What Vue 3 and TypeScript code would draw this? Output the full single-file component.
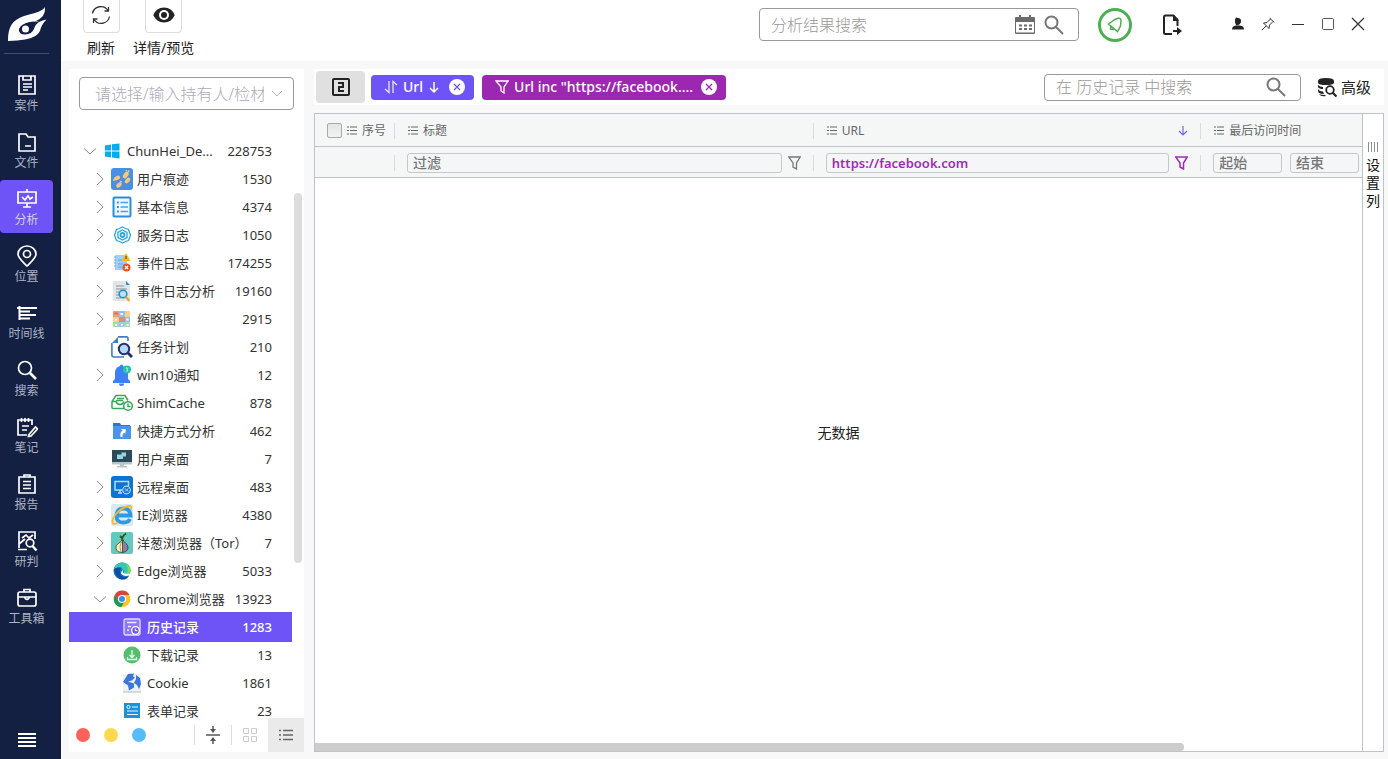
<script setup lang="ts">
import { ref } from 'vue'

interface NavItem { label: string; icon: string }
interface TreeNode { label: string; count: string; icon: string; level: number; state?: 'open' | 'closed' }

const navItems: NavItem[] = [
  { label: '案件', icon: '<path d="M3 2h16v18H3zM7 2v4h8V2M7 10h9M7 13h9M7 16h5"/>' },
  { label: '文件', icon: '<path d="M3 3h7l2 3h7v14H3zM9 15h6"/>' },
  { label: '分析', icon: '<path d="M2 4h18v11H2zM11 1v3M11 15v4M7 19h8M6 9l3 3 3-4 2 3 3-2"/>' },
  { label: '位置', icon: '<path d="M11 21C6 16 2 13 2 9a9 8 0 0 1 18 0c0 4-4 7-9 12z"/><circle cx="11" cy="9" r="3.5"/>' },
  { label: '时间线', icon: '<path d="M3.500 4v14M1 6h20M4 9.500h10M4 13h16M4 16.500h10" stroke-width="2"/>' },
  { label: '搜索', icon: '<circle cx="9" cy="9" r="6.5"/><path d="M14 14l6 6" stroke-width="2.6"/>' },
  { label: '笔记', icon: '<path d="M16 9V4H2v15h9M5.500 2v4M9 2v4M12.500 2v4M6 10h7M6 14h5M13 18.500l6.500-7.500 2 2L15 20l-2.500.5z"/>' },
  { label: '报告', icon: '<path d="M3 4h16v16H3zM8 4V2h6v2M7 8.500h8M7 12h8M7 15.500h8"/>' },
  { label: '研判', icon: '<path d="M19 9V2H3v16M2 19.500h9M6 8l4-3 3 3 4-3M3 14l6-5"/><circle cx="14" cy="13" r="3.8"/><path d="M16.500 16l4 4.500" stroke-width="2.400"/>' },
  { label: '工具箱', icon: '<rect x="2" y="5" width="18" height="14" rx="2"/><path d="M8 5V2.500h6V5M2 10h18M9 10v1q2 3 4 0v-1"/>' },
]
const activeNav = ref('分析')

const art: Record<string, string> = {
  windows: '<path fill="#00adef" d="M4 5.500l6-1v6H4zM11 4.300L18.500 3.500v7h-7.500zM4 11.500h6v6l-6-1zM11 11.500h7.500V18.500l-7.500-1z"/>',
  feet: '<rect width="22" height="22" rx="3" fill="#4a90e2"/><g fill="#f8c67c"><ellipse cx="14.800" cy="7" rx="2.300" ry="3.800" transform="rotate(35 14.800 7)"/><ellipse cx="6" cy="10" rx="2" ry="3.200" transform="rotate(65 6 10)"/><ellipse cx="16.500" cy="12.500" rx="2" ry="3.300" transform="rotate(40 16.500 12.500)"/><ellipse cx="8" cy="17" rx="2" ry="3.200" transform="rotate(45 8 17)"/><circle cx="17.500" cy="3.300" r="1"/><circle cx="15.300" cy="2.800" r=".8"/><circle cx="3" cy="12" r="1"/><circle cx="9.800" cy="13.800" r="1"/></g>',
  info: '<rect x="2.500" y="1.500" width="17" height="19" rx="1" fill="#eef6fd" stroke="#2a8de0" stroke-width="2"/><path d="M9.500 6.500H17M9.500 11H17M9.500 15.500H17" stroke="#4aa3ea" stroke-width="1.600"/><path d="M6 6.500h1.800M6 11h1.800M6 15.500h1.800" stroke="#2a8de0" stroke-width="1.800"/>',
  service: '<g fill="none" stroke="#29a5e0" stroke-width="1.300"><path d="M11.500 3l3 1.500 3 1 1 3 1 2.500-1 3-1 2.500-3 1-3 1.500-3-1.500-3-1-1-2.500-1-3 1-2.500 1-3 3-1z"/><path d="M11.500 6l4.500 2.500v5l-4.500 2.500L7 13.500v-5z"/><circle cx="11.500" cy="11" r="2" stroke-width="1.800"/></g>',
  event: '<path fill="#9ed0fb" d="M4 3h12v15H4z"/><path stroke="#5ba8ec" d="M3 5h2M3 8h2M3 11h2M3 14h2M7 8h7M7 12h5M7 15h4"/><path fill="#fdb614" d="M15 1L19.500 9h-9z"/><path stroke="#754b00" stroke-width="1.200" d="M15 4v3"/><circle cx="15.500" cy="15.500" r="4" fill="#f04e23"/><path stroke="#fff" stroke-width="1.400" d="M14 14l3 3M17 14l-3 3"/>',
  analyze: '<path fill="#e3e6e8" d="M2 1h13l4 4v16H2z"/><path fill="#2196d6" d="M15 1l4 4h-4z"/><path stroke="#8b9399" d="M5 6h8M5 9h11M5 12h3M5 15h3M5 18h5"/><circle cx="12" cy="14" r="3.800" fill="#b9e4fa" stroke="#258fc8" stroke-width="1.600"/><path stroke="#f5a623" stroke-width="2.400" d="M15 17l3.500 4"/>',
  thumbs: '<path fill="#ee9a7b" d="M2 3h6v6H2z"/><path fill="#8fc3ee" d="M8 3h6v6H8zM14 9h5v5h-5z"/><path fill="#f6cf93" d="M14 3h5v6h-5zM2 9h6v5H2z"/><path fill="#e88a68" d="M8 9h6v5H8z"/><path fill="#a9d6aa" d="M2 14h6v5H2zM14 14h5v5h-5z"/><path fill="#9ccbf0" d="M8 14h6v5H8z"/><path stroke="#dd7358" stroke-width="1.500" d="M3 6l2-1 2 1"/><path fill="#fff" d="M9.500 5h2.500v2H9.500zM15.500 10.500h2v2h-2zM4 11h2v1.500H4zM4 16h2v2H4zM10 16h2v1.500h-2zM15.500 16h2v2h-2z"/>',
  task: '<path fill="#3b7ec4" d="M1 7l6-6v6z"/><path fill="none" stroke="#3b7ec4" stroke-width="1.600" d="M7 .9h8.500q1.500 0 1.500 2V5M.9 7v12q0 2 2 2H13"/><circle cx="13" cy="13" r="5.200" fill="#b4d8f6" stroke="#252f6c" stroke-width="2"/><path stroke="#252f6c" stroke-width="2.800" d="M17 17l4 4"/>',
  bell: '<path fill="#3d7ff5" d="M10.500.5q1.500 0 1.500 1.500 5 1.500 5 7v6l2 2v2H2V17l2-2V9q0-5.500 5-7Q9 .5 10.500.5zM8 19.500h5q0 2.500-2.500 2.500T8 19.500z"/><circle cx="16" cy="5.500" r="4" fill="#1fc9a5"/><path stroke="#fff" d="M15 4.500l1-.8V7.500"/>',
  shim: '<g fill="none" stroke="#34a95b" stroke-width="1.500"><path d="M13 16.500H2q-1 0-1-1V9.500l4-6h9l3 5M1 9.500h4q1 3 4 3t4-3M6 6.500h7M5 8.500h7"/><circle cx="17" cy="14" r="4.300"/><path d="M17 11.500v3h2.500"/></g>',
  shortcut: '<path fill="#2f75d6" d="M2 3h7l1 2h9v3H2z"/><path fill="#4a94ea" d="M2 6h18v13H2z"/><path fill="#fff" d="M10 9l5 .2-.8 4.500-1.200-1.200q-2 1.500-1.500 4.500h-2q-1-4.500 2-6.500z"/>',
  desktop: '<path fill="#2c4a57" d="M1 2h20v13H1z"/><path fill="#b8c6cc" d="M1 14h20v2.500H1zM9 16.500h4v2H9zM6 18h10v1.500H6z"/><path fill="#8ed8e8" d="M10.500 4.500H15v4h-4.500zM6 6.500h6V11H6z"/>',
  remote: '<rect width="22" height="22" rx="3" fill="#0d74d3"/><path fill="none" stroke="#b4dbfa" stroke-width="1.500" d="M17.500 10V5.500H4V14h7M7 17h4M9 14v3"/><circle cx="15.500" cy="14" r="3.800" fill="#0d74d3" stroke="#b4dbfa" stroke-width="1.200"/><path fill="none" stroke="#b4dbfa" d="M14 12.300l1.500 1.700-1.500 1.700M17.300 12.300L15.800 14l1.500 1.700"/>',
  ie: '<rect width="22" height="22" rx="2" fill="#dceaf0"/><path fill="none" stroke="#2c9be6" stroke-width="3.800" d="M6 11.500h13.500Q19 4.500 12.500 4.500T5.500 11.500t7 7q5 0 6.500-3.500"/><path fill="none" stroke="#f4b92c" stroke-width="1.800" d="M2 19.500Q0 16 5.500 9.500T18.500 2q2.500 0 1.500 3.500M2 19.500q1.500 1 5-1"/>',
  tor: '<rect width="22" height="22" rx="2" fill="#63c8bd"/><path fill="#8f7bb0" stroke="#31451e" stroke-width=".8" d="M11.500 7q1 2.500 3.500 4.500t2 5.500q-1.500 3.500-6 3.500z"/><path fill="#f6f0c3" stroke="#31451e" stroke-width=".8" d="M11.500 7q-.5 2.500-4 4.500T5 16.500q1 4 6.500 4z"/><path fill="none" stroke="#31571e" stroke-width="1.800" d="M11.500 9Q10 5 15 1.500M11 6L9 4"/><path fill="none" stroke="#b79a43" d="M10.500 10q-3 5-.5 10"/>',
  edge: '<circle cx="11" cy="11" r="8.500" fill="#1477c8"/><path fill="#35c9b2" d="M3 9Q5 2.500 11.500 2.500q7.500.8 8 7.500 0 4-4.500 4.200-3 0-2-2.200Q12.500 7 3 9z"/><path fill="#79dc5c" d="M14.500 3.200q5 2.500 5 7t-4 4q3-5-1-11z"/><path fill="#0c4ea0" d="M3 9q5-3 8-1-4 3-1 7t8 1q-3 4.500-8 3.400T3 9z"/><path fill="#fff" d="M12 10q-1.500 5 7.500 3.500l-1 2q-6.500 1.500-8.500-2 0-2.500 2-3.500z"/>',
  chrome: '<circle cx="11" cy="11" r="8.300" fill="#f8c51c"/><path fill="#dc4437" d="M3.800 6.900A8.300 8.300 0 0 1 18.400 7H11l-3.500 6z"/><path fill="#159a59" d="M3.800 6.900A8.300 8.300 0 0 0 10 19.200L14 13l-6.500 0z"/><circle cx="11" cy="11" r="4" fill="#fff"/><circle cx="11" cy="11" r="3" fill="#4387ee"/>',
  history: '<rect x="3" y="3" width="16" height="16" rx="1.500" fill="#8b77fa" stroke="#e2ddff" stroke-width="1.300"/><path fill="none" stroke="#eeeaff" stroke-width="1.300" d="M6 6.500h9.500M7 10.500h3M6 14h2"/><circle cx="14.500" cy="14.500" r="3.800" fill="#6f57f8" stroke="#fff" stroke-width="1.300"/><path fill="none" stroke="#fff" d="M14.300 12.500v2.200h2"/>',
  download: '<circle cx="11" cy="11" r="8.500" fill="#55bd6c"/><path fill="none" stroke="#e6fae9" stroke-width="1.300" d="M11 6v7M8.500 11l2.500 2.500L13.500 11M6.500 13v2.500h9V13"/>',
  cookie: '<rect x="2" y="2" width="18" height="18" fill="#eef1f4"/><path stroke="#b7babe" d="M2 20h18"/><circle cx="12" cy="10" r="8" fill="#eaf2fc"/><path fill="#3b76d8" d="M2 10l5-8 6-.5-1 3 2 1-3 3-4 1 6 2v4l-5 3-1-5zM15 3l4 3 1 6-2 5-2-4-3-2 2-4z"/>',
  form: '<path fill="#1b92d7" d="M3 3h16v17H3z"/><circle cx="7.500" cy="7" r="1.600" fill="none" stroke="#e6f8ff"/><path stroke="#e6f8ff" stroke-width="1.200" d="M11 7h6M6 11h11M6 14.500h11"/>',
}

const tree: TreeNode[] = [
  { label: 'ChunHei_De...', count: '228753', icon: 'windows', level: 0, state: 'open' },
  { label: '用户痕迹', count: '1530', icon: 'feet', level: 1, state: 'closed' },
  { label: '基本信息', count: '4374', icon: 'info', level: 1, state: 'closed' },
  { label: '服务日志', count: '1050', icon: 'service', level: 1, state: 'closed' },
  { label: '事件日志', count: '174255', icon: 'event', level: 1, state: 'closed' },
  { label: '事件日志分析', count: '19160', icon: 'analyze', level: 1, state: 'closed' },
  { label: '缩略图', count: '2915', icon: 'thumbs', level: 1, state: 'closed' },
  { label: '任务计划', count: '210', icon: 'task', level: 1 },
  { label: 'win10通知', count: '12', icon: 'bell', level: 1, state: 'closed' },
  { label: 'ShimCache', count: '878', icon: 'shim', level: 1 },
  { label: '快捷方式分析', count: '462', icon: 'shortcut', level: 1 },
  { label: '用户桌面', count: '7', icon: 'desktop', level: 1 },
  { label: '远程桌面', count: '483', icon: 'remote', level: 1, state: 'closed' },
  { label: 'IE浏览器', count: '4380', icon: 'ie', level: 1, state: 'closed' },
  { label: '洋葱浏览器（Tor）', count: '7', icon: 'tor', level: 1, state: 'closed' },
  { label: 'Edge浏览器', count: '5033', icon: 'edge', level: 1, state: 'closed' },
  { label: 'Chrome浏览器', count: '13923', icon: 'chrome', level: 1, state: 'open' },
  { label: '历史记录', count: '1283', icon: 'history', level: 2 },
  { label: '下载记录', count: '13', icon: 'download', level: 2 },
  { label: 'Cookie', count: '1861', icon: 'cookie', level: 2 },
  { label: '表单记录', count: '23', icon: 'form', level: 2 },
]
const selected = ref('历史记录')
const urlFilter = ref('https://facebook.com')
</script>

<template>
  <div class="app">
    <nav class="nav">
      <div class="logo">
        <svg width="40" height="36" viewBox="0 0 40 36"><path fill="#fff" d="M37 0C34 5 26 6 16 9 4 13 0 20 0 34q10-.5 17-1.500 12-2 15-8.500 1-6 6.500-11.500-4 .5-7.500 2.500-2-1-4-.5Q38 10 37 0z"/><path fill="#132042" d="M31 15q-7-1.500-13 1-8 3.500-7 8 1 3.500 6 3.500 7-.5 9-5.500 1-4.500 5-7z"/><circle cx="17.500" cy="22" r="3.500" fill="#fff"/></svg>
      </div>
      <div class="nav-list">
        <button v-for="item in navItems" :key="item.label" type="button" class="nav-item" :class="{ active: item.label === activeNav }" @click="activeNav = item.label">
          <svg class="line" width="22" height="22" viewBox="0 0 22 22" v-html="item.icon"></svg>
          <span>{{ item.label }}</span>
        </button>
      </div>
      <button type="button" class="burger" aria-label="菜单">
        <svg width="18" height="16" viewBox="0 0 18 16"><path stroke="#fff" stroke-width="2" d="M0 2h18M0 6h18M0 10h18M0 14h18"/></svg>
      </button>
    </nav>

    <div class="content">
      <header class="topbar">
        <button type="button" class="tool">
          <span class="tool-box"><svg width="20" height="20" viewBox="0 0 20 20" fill="none" stroke="#333" stroke-width="1.3"><path d="M1.500 8.500a8.500 8.500 0 0 1 15.500-3M18.500 11.500a8.500 8.500 0 0 1-15.500 3M17.500 2v4h-4M2.500 18v-4h4"/></svg></span>
          <span>刷新</span>
        </button>
        <button type="button" class="tool">
          <span class="tool-box"><svg width="22" height="16" viewBox="0 0 22 16"><path fill="#222" d="M11 .5C6 .5 2 3.500.3 8 2 12.500 6 15.500 11 15.500S20 12.500 21.700 8C20 3.500 16 .5 11 .5z"/><circle cx="11" cy="8" r="5" fill="#fff"/><circle cx="11" cy="8" r="3" fill="#222"/></svg></span>
          <span>详情/预览</span>
        </button>
        <div class="search global">
          <input type="text" placeholder="分析结果搜索" aria-label="分析结果搜索" />
          <button type="button" aria-label="日期"><svg width="20" height="19" viewBox="0 0 20 19"><path fill="#6b6b6b" fill-rule="evenodd" d="M1 2h3V0h2v2h8V0h2v2h3q1 0 1 1v15q0 1-1 1H1q-1 0-1-1V3q0-1 1-1zm0 5v10.500h18V7z"/><path stroke="#6b6b6b" stroke-width="2" stroke-dasharray="3 2" d="M4 10.500h13M4 14h13"/></svg></button>
          <button type="button" aria-label="搜索"><svg width="20" height="20" viewBox="0 0 20 20" fill="none" stroke="#777"><circle cx="7.500" cy="7.500" r="6" stroke-width="2"/><path stroke-width="2" d="M12 12l7 7"/></svg></button>
        </div>
        <button type="button" class="alarm" aria-label="通知"><svg width="16" height="16" viewBox="0 0 16 16" fill="none" stroke="#4caf50" stroke-width="1.500"><path d="M1.500 7L8 2.500Q14-.5 14 3.500L13.500 9l-3 5.500zM4 9l-.5 3 3.500.5"/></svg></button>
        <button type="button" class="export" aria-label="导出"><svg width="20" height="22" viewBox="0 0 20 22"><path fill="none" stroke="#222" stroke-width="2" d="M9 20H2.500Q1 20 1 18.500V3q0-1.500 1.500-1.500h8l4 4.500v6"/><path fill="#222" d="M10 1v6h6zM10 16h4v-3l5 4-5 4v-3h-4z"/></svg></button>
        <div class="window-tools">
          <button type="button" aria-label="用户"><svg width="14" height="14" viewBox="0 0 14 14"><path fill="#222" d="M7 1q3 0 3 3T7 8 4 4t3-3zM1 12.500q0-3.500 4-4h4q4 .5 4 4z"/></svg></button>
          <button type="button" aria-label="置顶"><svg width="14" height="14" viewBox="0 0 14 14" fill="none" stroke="#333"><path d="M8.500.8L13.200 5.500M9.500 2L6 5.500l-3.500.5 5.500 5.500.5-3.500L12 4.500M5.200 8.800L.8 13.200"/></svg></button>
          <button type="button" aria-label="最小化"><svg width="14" height="14" viewBox="0 0 14 14" stroke="#333"><path d="M1 7.500h12"/></svg></button>
          <button type="button" aria-label="最大化"><svg width="14" height="14" viewBox="0 0 14 14" fill="none" stroke="#555"><rect x="1.500" y="1.500" width="11" height="11" rx="1"/></svg></button>
          <button type="button" aria-label="关闭"><svg width="14" height="14" viewBox="0 0 14 14" stroke="#333" stroke-width="1.200"><path d="M1 1l12 12M13 1L1 13"/></svg></button>
        </div>
      </header>

      <div class="workspace">
        <aside class="side">
          <div class="picker">
            <input type="text" placeholder="请选择/输入持有人/检材" aria-label="持有人或检材" />
            <svg width="12" height="8" viewBox="0 0 12 8" fill="none" stroke="#b4b7bd"><path d="M1 1l5 5 5-5"/></svg>
          </div>
          <div class="tree-area">
            <div class="tree" role="tree">
              <button v-for="node in tree" :key="node.label" type="button" role="treeitem" class="row" :class="['level' + node.level, { selected: node.label === selected }]" :aria-selected="node.label === selected" @click="selected = node.label">
                <svg class="arrow" width="14" height="14" viewBox="0 0 14 14" fill="none" stroke="#8c8c8c"><path v-if="node.state === 'open'" d="M1 4.500l6 5.500 6-5.500"/><path v-else-if="node.state === 'closed'" d="M4 1l6 6-6 6"/></svg>
                <svg class="art" width="22" height="22" viewBox="0 0 22 22" v-html="art[node.icon]"></svg>
                <span class="name">{{ node.label }}</span>
                <span class="count">{{ node.count }}</span>
              </button>
            </div>
            <div class="track"><div class="thumb"></div></div>
          </div>
          <footer class="side-foot">
            <button type="button" class="dot red" aria-label="红色标记"></button>
            <button type="button" class="dot yellow" aria-label="黄色标记"></button>
            <button type="button" class="dot blue" aria-label="蓝色标记"></button>
            <button type="button" class="foot-tool first" aria-label="折叠"><svg width="14" height="20" viewBox="0 0 14 20"><path stroke="#555" stroke-width="1.500" d="M0 10h14M7 1v6M7 13v6"/><path fill="#555" d="M4 4h6L7 8zM4 16h6l-3-4z"/></svg></button>
            <button type="button" class="foot-tool" aria-label="网格"><svg width="14" height="14" viewBox="0 0 14 14" fill="none" stroke="#ccc"><path d="M.5.5h5v5h-5zM8.500.5h5v5h-5zM.5 8.500h5v5h-5zM8.500 8.500h5v5h-5z"/></svg></button>
            <button type="button" class="foot-list" aria-label="列表"><svg width="14" height="12" viewBox="0 0 14 12" stroke="#666" stroke-width="1.500"><path d="M0 1.500h2M4 1.500h10M0 6h2M4 6h10M0 10.500h2M4 10.500h10"/></svg></button>
          </footer>
        </aside>

        <main class="results">
          <div class="query">
            <button type="button" class="tally" aria-label="条件数量"><svg width="18" height="18" viewBox="0 0 18 18" fill="none" stroke="#222" stroke-width="2"><rect x="1" y="1" width="16" height="16" rx="1"/><path d="M6 5h5v4H7v4h5"/></svg></button>
            <div class="chip sort">
              <svg width="14" height="14" viewBox="0 0 14 14" fill="none" stroke="#e8e3ff" stroke-width="1.300"><path d="M5 1v11.500L1 9M9 13V1.500L13 5"/></svg>
              <span>Url</span>
              <svg width="12" height="12" viewBox="0 0 12 12" fill="none" stroke="#fff" stroke-width="1.500"><path d="M6 1v10M2 7l4 4 4-4"/></svg>
              <button type="button" aria-label="移除排序"><svg width="16" height="16" viewBox="0 0 16 16"><circle cx="8" cy="8" r="8" fill="#fff"/><path stroke="#6e54f7" stroke-width="1.300" d="M5 5l6 6M11 5l-6 6"/></svg></button>
            </div>
            <div class="chip filter">
              <svg width="14" height="14" viewBox="0 0 14 14" fill="none" stroke="#fff" stroke-width="1.300"><path d="M1 1h12L9 7v6l-3-2V7z"/></svg>
              <span>Url inc "https://facebook....</span>
              <button type="button" aria-label="移除过滤"><svg width="16" height="16" viewBox="0 0 16 16"><circle cx="8" cy="8" r="8" fill="#fff"/><path stroke="#9c27b0" stroke-width="1.300" d="M5 5l6 6M11 5l-6 6"/></svg></button>
            </div>
            <div class="search local">
              <input type="text" placeholder="在 历史记录 中搜索" aria-label="在 历史记录 中搜索" />
              <button type="button" aria-label="搜索"><svg width="20" height="20" viewBox="0 0 20 20" fill="none" stroke="#777"><circle cx="7.500" cy="7.500" r="6" stroke-width="2"/><path stroke-width="2" d="M12 12l7 7"/></svg></button>
            </div>
            <button type="button" class="advanced">
              <svg width="20" height="20" viewBox="0 0 20 20"><path fill="#222" d="M1 4Q1 1 9 1t8 3v2q-1 2-8 2T1 6zM1 8q2 2 5 2v2Q2 12 1 10zM1 12q1 2 5 2.500L7 17Q1 17 1 14zM2 17q2 1 6 1l1 1q-5 1-7-2z"/><circle cx="13" cy="13" r="3.800" fill="#fff" stroke="#222" stroke-width="1.800"/><path stroke="#222" stroke-width="2.200" d="M15.500 15.500l4 4"/></svg>
              <span>高级</span>
            </button>
          </div>

          <div class="grid">
            <div class="grid-main">
              <table>
                <colgroup><col class="c-index" /><col class="c-title" /><col class="c-url" /><col /></colgroup>
                <thead>
                  <tr class="heads">
                    <th class="index"><div class="cell"><input type="checkbox" aria-label="全选" /><svg class="menu" width="10" height="9" viewBox="0 0 10 9"><path d="M0 1h2M3 1h7M0 4.500h2M3 4.500h7M0 8h2M3 8h7"/></svg><span>序号</span></div></th>
                    <th><div class="cell"><svg class="menu" width="10" height="9" viewBox="0 0 10 9"><path d="M0 1h2M3 1h7M0 4.500h2M3 4.500h7M0 8h2M3 8h7"/></svg><span>标题</span></div></th>
                    <th><div class="cell"><svg class="menu" width="10" height="9" viewBox="0 0 10 9"><path d="M0 1h2M3 1h7M0 4.500h2M3 4.500h7M0 8h2M3 8h7"/></svg><span>URL</span><svg class="sorted" width="10" height="10" viewBox="0 0 10 10" fill="none" stroke="#7660f8" stroke-width="1.200"><path d="M5 0v9M1 5l4 4 4-4"/></svg></div></th>
                    <th><div class="cell last"><svg class="menu" width="10" height="9" viewBox="0 0 10 9"><path d="M0 1h2M3 1h7M0 4.500h2M3 4.500h7M0 8h2M3 8h7"/></svg><span>最后访问时间</span></div></th>
                  </tr>
                  <tr class="filters">
                    <td><div class="cell"></div></td>
                    <td><div class="cell"><input type="text" placeholder="过滤" aria-label="标题过滤" /><svg width="13" height="14" viewBox="0 0 13 14" fill="none" stroke="#777" stroke-width="1.300"><path d="M.8 1h11.400L8.500 7v6l-3.500-2V7z"/></svg></div></td>
                    <td><div class="cell"><input v-model="urlFilter" type="text" class="url" aria-label="URL过滤" /><svg width="13" height="14" viewBox="0 0 13 14" fill="none" stroke="#a22bb6" stroke-width="1.500"><path d="M.8 1h11.400L8.500 7v6l-3.500-2V7z"/></svg></div></td>
                    <td><div class="cell range"><input type="text" placeholder="起始" aria-label="起始时间" /><input type="text" placeholder="结束" aria-label="结束时间" /></div></td>
                  </tr>
                </thead>
              </table>
              <div class="empty">无数据</div>
              <div class="h-thumb"></div>
            </div>
            <button type="button" class="columns">
              <svg width="11" height="10" viewBox="0 0 11 10" stroke="#8a8f93"><path d="M.5 0v10M3.500 0v10M6.500 0v10M9.500 0v10"/></svg>
              <span>设置列</span>
            </button>
          </div>
        </main>
      </div>
    </div>
  </div>
</template>

<style>
body { margin: 0; }
</style>

<style scoped>
.app, .app * { box-sizing: border-box; }
.app { display: flex; height: 100vh; overflow: hidden; background: #f8f8f8; color: #222; font: 14px/20px "Noto Sans", "Noto Sans CJK SC", sans-serif; }
svg { display: block; flex: none; }
button { display: flex; align-items: center; justify-content: center; margin: 0; padding: 0; border: 0; background: none; color: inherit; font: inherit; cursor: pointer; }
input { min-width: 0; margin: 0; font: inherit; outline: none; }

.nav { display: flex; flex: none; flex-direction: column; width: 61px; padding-bottom: 11px; background: #132042; }
.logo { width: 45px; height: 54px; margin-left: 4px; padding: 7px 0 0 4px; border-bottom: 1px solid #3f4d7c; }
.nav-list { display: flex; flex: 1; flex-direction: column; gap: 4px; padding-top: 12px; }
.nav-item { flex-direction: column; gap: 1px; width: 53px; height: 53px; padding-top: 4px; border-radius: 4px; color: #aeb4c4; font-size: 12px; line-height: 18px; white-space: nowrap; }
.nav-item.active { background: #6e54f7; color: #d5cdff; }
.line { fill: none; stroke: #fff; stroke-width: 1.7; }
.burger { width: 53px; }

.content { display: flex; flex: 1; flex-direction: column; min-width: 0; }
.topbar { display: flex; flex: none; align-items: flex-start; height: 61px; padding: 0 23px 0 20px; background: #fff; }
.tool { flex-direction: column; gap: 5px; min-width: 40px; margin-right: 12px; }
.tool-box { display: flex; align-items: center; justify-content: center; width: 37px; height: 33px; padding-bottom: 2px; border: 1px solid #ddd; border-top: 0; border-radius: 0 0 4px 4px; }
.search { display: flex; align-items: center; border: 1px solid #999; border-radius: 4px; background: #fff; }
.search input { flex: 1; padding: 0; border: 0; background: none; font-size: 16px; font-weight: 300; line-height: 24px; }
.search input::placeholder { color: #999; opacity: 1; }
.global { gap: 9px; width: 320px; height: 33px; margin: 8px 19px 0 auto; padding: 0 14px 0 11px; }
.alarm { width: 34px; height: 34px; margin-top: 8px; border: 3px solid #4caf50; border-radius: 50%; }
.export { margin: 14px 48px 0 31px; }
.window-tools { display: flex; gap: 16px; margin-top: 17px; }

.workspace { display: flex; flex: 1; gap: 10px; min-height: 0; padding: 8px 4px 7px 8px; }
.side { display: flex; flex: none; flex-direction: column; width: 235px; background: #fff; }
.picker { display: flex; flex: none; align-items: center; gap: 7px; height: 33px; margin: 8px 10px 27px; padding: 0 10px 0 15px; border: 1px solid #999; border-radius: 4px; }
.picker input { flex: 1; padding: 0; border: 0; background: none; font-size: 16px; font-weight: 300; line-height: 24px; }
.picker input::placeholder { color: #a9adb9; opacity: 1; }
.tree-area { display: flex; flex: 1; min-height: 0; overflow: hidden; }
.tree { flex: 1; min-width: 0; }
.row { justify-content: flex-start; width: 100%; height: 28px; padding: 0 20px 0 24px; color: #333; font-size: 13px; line-height: 14px; white-space: nowrap; }
.row.level0 { padding-left: 14px; }
.row.level2 { padding-left: 34px; }
.row.selected { height: 30px; margin: -1px 0; background: #6e54f7; color: #fff; font-weight: 500; }
.art { margin: 0 4px; }
.count { margin-left: auto; }
.track { flex: none; width: 12px; padding: 56px 2px 0; }
.thumb { height: 71%; max-height: 370px; border-radius: 4px; background: #ddd; }
.side-foot { display: flex; flex: none; align-items: center; height: 34px; padding-left: 7px; }
.dot { width: 14px; height: 14px; margin-right: 14px; border-radius: 50%; }
.red { background: #ff6259; }
.yellow { background: #ffd84f; }
.blue { background: #57bcfc; }
.foot-tool { width: 37px; height: 20px; border-left: 1px solid #ddd; }
.foot-tool.first { margin-left: auto; }
.foot-list { width: 36px; height: 34px; background: #eaeaea; }

.results { display: flex; flex: 1; flex-direction: column; gap: 8px; min-width: 0; }
.query { display: flex; flex: none; align-items: center; height: 36px; padding: 0 13px 0 2px; background: #fff; }
.tally { width: 49px; height: 32px; margin-right: 6px; border-radius: 4px; background: #e0e0e0; }
.chip { display: flex; align-items: center; height: 25px; margin-right: 8px; border-radius: 4px; color: #fff; font-weight: 500; white-space: nowrap; }
.sort { gap: 5px; padding: 0 9px 0 13px; background: #6e54f7; }
.sort button { margin-left: 4px; }
.filter { gap: 5px; padding: 0 9px 0 13px; background: #9c27b0; }
.filter button { margin-left: 3px; }
.local { width: 257px; height: 27px; margin: 0 16px 0 auto; padding: 0 14px 0 11px; }
.local input { font-size: 16px; }
.advanced { gap: 4px; font-size: 15px; }

.grid { display: flex; flex: 1; min-height: 0; border: 1px solid #bdc3c7; background: #fff; }
.grid-main { position: relative; display: flex; flex: 1; flex-direction: column; min-width: 0; overflow: hidden; }
table { width: 100%; border-collapse: separate; border-spacing: 0; table-layout: fixed; }
.c-index { width: 80px; }
.c-title { width: 40%; }
.c-url { width: 37%; }
th, td { padding: 1px 0 0; border-bottom: 1px solid #bdc3c7; background: #f5f7f7; color: #666; font-size: 12px; font-weight: 400; text-align: left; }
.cell { display: flex; align-items: center; padding: 0 12px; border-right: 1px solid #d8dcdf; height: 16px; }
th { height: 33px; }
td { height: 31px; }
th:last-child .cell, td:last-child .cell { border-right: 0; }
th .cell { gap: 5px; padding-left: 13px; white-space: nowrap; }
th.index .cell { padding: 0 6px 0 12px; }
.menu { fill: none; stroke: #666; stroke-width: 1.2; }
.sorted { margin-left: auto; }
input[type="checkbox"] { appearance: none; flex: none; width: 15px; height: 15px; border: 1px solid #aaa; border-radius: 2px; background: linear-gradient(#e4e4e4, #f2f2f2); }
td .cell { gap: 6px; }
td input { flex: 1; height: 20px; padding: 0 5px; border: 1px solid #c4c8ca; border-radius: 3px; background: #f5f7f7; color: #666; font-size: 14px; font-weight: 500; line-height: 18px; }
td input::placeholder { color: #777; opacity: 1; }
td .url { color: #a22bb6; font-size: 13px; font-weight: 600; }
td .range { gap: 8px; padding-right: 3px; }
.empty { position: absolute; inset: 0; display: flex; align-items: center; justify-content: center; pointer-events: none; }
.h-thumb { width: 83%; height: 8px; margin-top: auto; border-radius: 0 4px 4px 0; background: #ccc; }
.columns { flex: none; flex-direction: column; justify-content: flex-start; gap: 4px; width: 21px; padding-top: 28px; border-left: 1px solid #bdc3c7; color: #111; line-height: 18px; }
.columns span { width: 14px; }
</style>
